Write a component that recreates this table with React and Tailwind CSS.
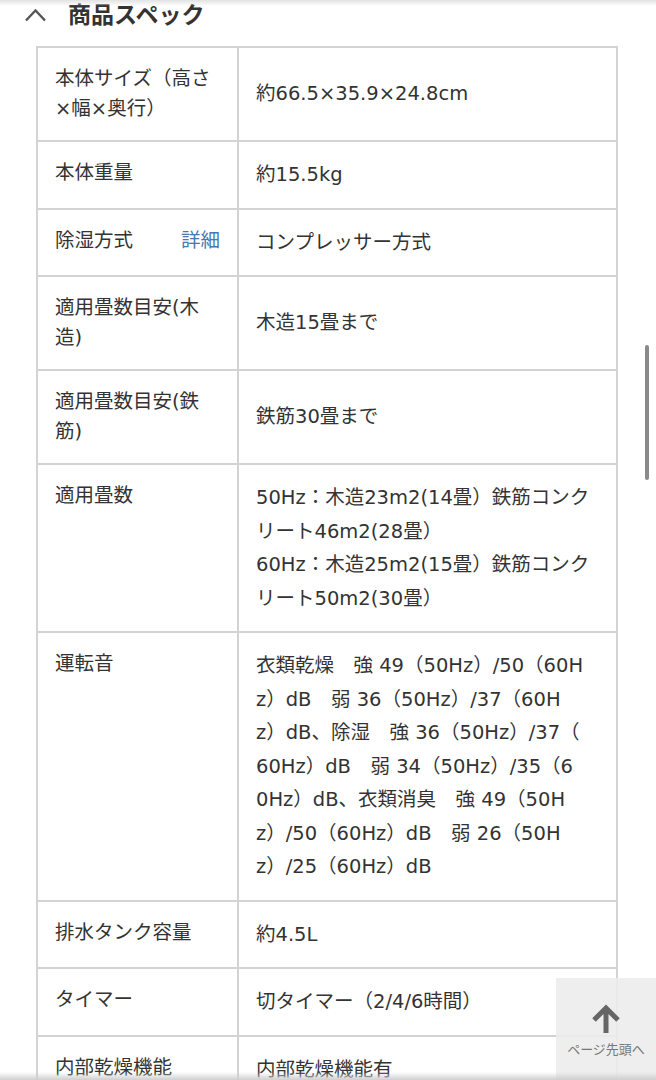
import React from 'react';

const rows = [
  { label: ['本体サイズ（高さ', '×幅×奥行）'], value: ['約66.5×35.9×24.8cm'] },
  { label: ['本体重量'], value: ['約15.5kg'] },
  { label: ['除湿方式'], link: '詳細', value: ['コンプレッサー方式'] },
  { label: ['適用畳数目安(木', '造)'], value: ['木造15畳まで'] },
  { label: ['適用畳数目安(鉄', '筋)'], value: ['鉄筋30畳まで'] },
  {
    label: ['適用畳数'],
    value: [
      '50Hz：木造23m2(14畳）鉄筋コンク',
      'リート46m2(28畳）',
      '60Hz：木造25m2(15畳）鉄筋コンク',
      'リート50m2(30畳）',
    ],
  },
  {
    label: ['運転音'],
    value: [
      '衣類乾燥　強 49（50Hz）/50（60H',
      'z）dB　弱 36（50Hz）/37（60H',
      'z）dB、除湿　強 36（50Hz）/37（',
      '60Hz）dB　弱 34（50Hz）/35（6',
      '0Hz）dB、衣類消臭　強 49（50H',
      'z）/50（60Hz）dB　弱 26（50H',
      'z）/25（60Hz）dB',
    ],
  },
  { label: ['排水タンク容量'], value: ['約4.5L'] },
  { label: ['タイマー'], value: ['切タイマー（2/4/6時間）'] },
  { label: ['内部乾燥機能'], value: ['内部乾燥機能有'] },
];

export default function App() {
  return (
    <div
      className="relative w-[656px] h-[1080px] overflow-hidden bg-white text-[#333]"
      style={{ fontFamily: '"DejaVu Sans", "Noto Sans CJK JP", sans-serif' }}
    >
      {/* section header */}
      <div className="flex items-center h-[30px]">
        <svg className="ml-[24px] w-[23px] h-[14px]" viewBox="0 0 23 14" fill="none">
          <polyline points="2,12.5 11.5,2.5 21,12.5" stroke="#555" strokeWidth="2.4" />
        </svg>
        <h2 className="ml-[21px] text-[23px] font-bold leading-[30px] text-[#333]">商品スペック</h2>
      </div>

      <table className="ml-[36px] mt-[16px] w-[582px] border-collapse table-fixed text-[19.5px]">
        <colgroup>
          <col className="w-[201px]" />
          <col />
        </colgroup>
        <tbody>
          {rows.map((row, i) => (
            <tr key={i}>
              <td className="border-2 border-[#d3d3d3] align-top px-[17px] py-4 leading-[30px]">
                <div className="flex justify-between">
                  <div>
                    {row.label.map((l, j) => (
                      <div key={j} className="whitespace-nowrap">{l}</div>
                    ))}
                  </div>
                  {row.link && <span className="text-[#4a77b0]">{row.link}</span>}
                </div>
              </td>
              <td className="border-2 border-[#d3d3d3] align-middle px-[17px] py-4 leading-[33.5px]">
                {row.value.map((v, j) => (
                  <div key={j} className="whitespace-nowrap">{v}</div>
                ))}
              </td>
            </tr>
          ))}
        </tbody>
      </table>

      {/* top shadow */}
      <div className="absolute top-0 left-0 right-0 h-[6px] bg-gradient-to-b from-[#e2e2e2] to-transparent" />

      {/* scrollbar */}
      <div className="absolute left-[645px] top-[345px] w-[4px] h-[135px] rounded-full bg-[#8a8a8a]" />

      {/* back to top */}
      <div className="absolute left-[556px] top-[978px] w-[100px] h-[102px] bg-[#ececec]/90 flex flex-col items-center">
        <svg className="mt-[26px] w-[32px] h-[30px]" viewBox="0 0 32 30" fill="none">
          <path d="M16 4 V29 M4 16 L16 4 L28 16" stroke="#666" strokeWidth="5" />
        </svg>
        <span className="mt-[8px] text-[13px] leading-[16px] text-[#777] whitespace-nowrap">ページ先頭へ</span>
      </div>

      {/* bottom shadow */}
      <div className="absolute bottom-0 left-0 right-0 h-[8px] bg-gradient-to-t from-[#cfcfcf] to-transparent" />
    </div>
  );
}
